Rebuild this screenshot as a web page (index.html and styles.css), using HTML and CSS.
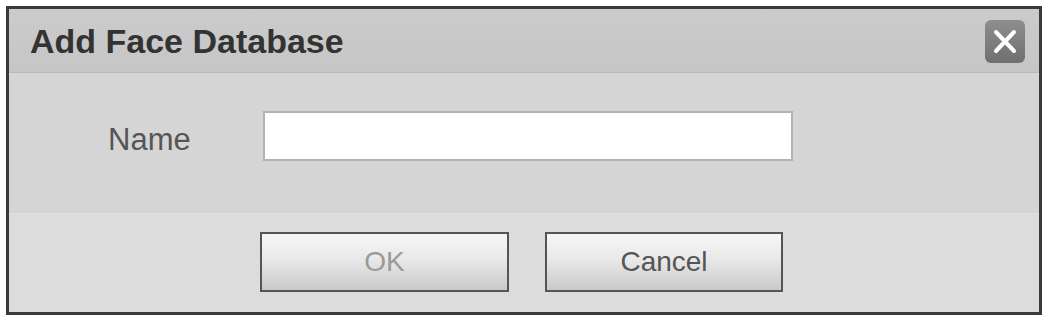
FILE: index.html
```html
<html>
<head>
<meta charset="utf-8">
<title>Add Face Database</title>
<link rel="stylesheet" href="styles.css">
</head>
<body>
<div class="dialog">
  <div class="title">
    <span class="caption">Add Face Database</span>
    <span class="close">
      <svg width="40" height="43" viewBox="0 0 40 43">
        <defs>
          <linearGradient id="cg" x1="0" y1="0" x2="0" y2="1">
            <stop offset="0" stop-color="#8e8e8e"/>
            <stop offset="1" stop-color="#6f6f6f"/>
          </linearGradient>
        </defs>
        <rect x="0" y="0" width="40" height="43" rx="6" fill="url(#cg)"/>
        <path d="M11 12 L29 31 M29 12 L11 31" stroke="#fff" stroke-width="4" stroke-linecap="round"/>
      </svg>
    </span>
  </div>
  <div class="content">
    <label class="label" for="name">Name</label>
    <input class="field" id="name" type="text">
  </div>
  <div class="footer">
    <button class="btn ok" disabled>OK</button>
    <button class="btn cancel">Cancel</button>
  </div>
</div>
</body>
</html>
```

FILE: styles.css
```css
* {
    margin:0px;
    padding:0px;
    box-sizing:border-box;
}
html, body {
    background:#ffffff;
    font-family:"Liberation Sans", Arial, sans-serif;
}
.dialog {
    margin:6px 0 0 6px;
    width:1036px;
    border:3px solid #3a3a3a;
}
.title {
    height:64px;
    background:linear-gradient(#cbcbcb, #c6c6c6);
    border-bottom:1px solid #b9b9b9;
    display:flex;
    align-items:center;
    justify-content:space-between;
    padding:2px 14px 0 21px;
}
.caption {
    font-size:34px;
    font-weight:bold;
    color:#333333;
}
.close {
    display:flex;
}
.content {
    height:140px;
    background:#d5d5d5;
    border-bottom:1px solid #cfcfcf;
    display:flex;
    align-items:center;
    padding:0 0 6px 99px;
}
.label {
    font-size:31px;
    color:#555555;
    width:155px;
}
.field {
    width:530px;
    height:50px;
    margin-bottom:8px;
    background:#ffffff;
    border:2px solid #b3b3b3;
    outline:none;
}
.footer {
    height:99px;
    background:#dcdcdc;
    border-top:1px solid #e3e3e3;
    display:flex;
    justify-content:center;
    gap:36px;
    padding:18px 5px 0 0;
}
.btn {
    height:60px;
    border:2px solid #555555;
    background:linear-gradient(#f7f7f7, #e9e9e9 45%, #c9c9c9);
    font-family:"Liberation Sans", Arial, sans-serif;
    font-size:28px;
}
.ok {
    width:249px;
    color:#9a9a9a;
}
.cancel {
    width:238px;
    color:#555555;
}
```
